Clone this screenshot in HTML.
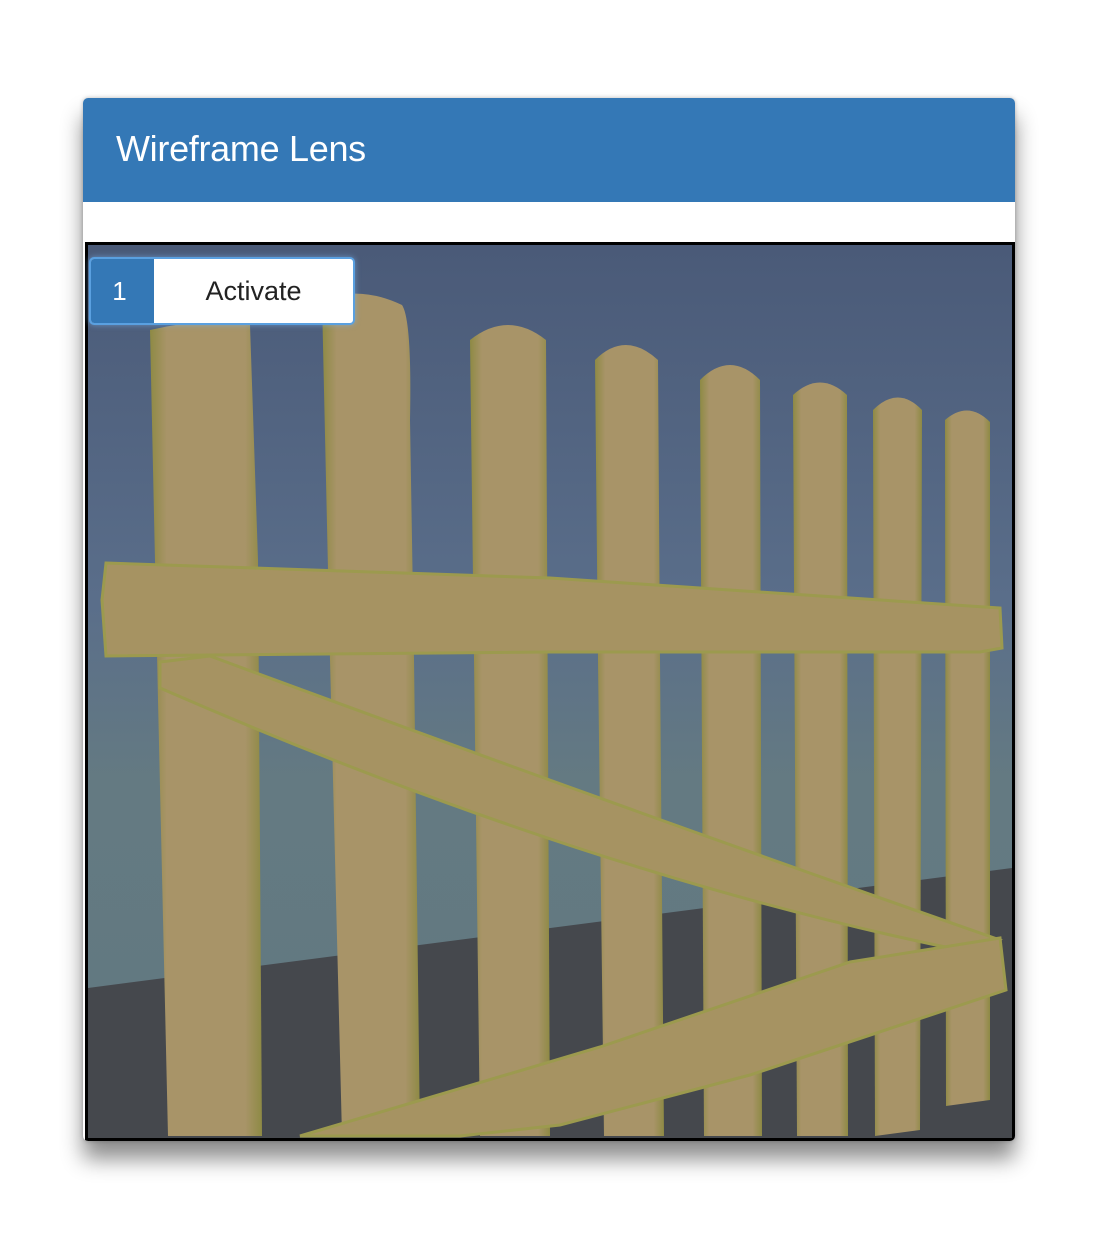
<!DOCTYPE html>
<html><head><meta charset="utf-8"><style>
body{margin:0;width:1096px;height:1238px;background:#fff;position:relative;overflow:hidden;font-family:"Liberation Sans",sans-serif}
.win{position:absolute;left:83px;top:98px;width:932px;height:1043px;background:#fff;border-radius:5px;box-shadow:0 18px 22px rgba(0,0,0,.45),0 0 4px rgba(0,0,0,.25);overflow:hidden}
.hd{position:absolute;left:0;top:0;width:932px;height:104px;background:#3478b6}
.hd span{position:absolute;left:33px;top:30px;color:#fff;font-size:36px;letter-spacing:-0.3px}
.cv{position:absolute;left:2px;top:144px;width:924px;height:893px;border:3px solid #000;overflow:hidden}
.btn{position:absolute;left:6px;top:159px;width:262px;height:64px;border:2px solid #5aa0e0;border-radius:5px;background:#fff;box-shadow:0 0 6px rgba(120,180,240,.6);overflow:hidden}
.btn .n{position:absolute;left:0;top:0;width:63px;height:64px;background:#3478b6;color:#fff;font-size:26px;line-height:64px;text-align:center;padding-right:6px;box-sizing:border-box}
.btn .t{position:absolute;left:63px;right:0;top:0;height:64px;line-height:64px;text-align:center;font-size:27px;color:#222}
</style></head><body>
<div class="win">
<div class="hd"><span>Wireframe Lens</span></div>
<div class="cv">
<svg width="924" height="893" viewBox="88 245 924 893" xmlns="http://www.w3.org/2000/svg">
<defs>
<linearGradient id="sky" x1="0" y1="0" x2="0" y2="1">
<stop offset="0" stop-color="#4a5a78"/><stop offset="0.4" stop-color="#5a6e8a"/><stop offset="0.6" stop-color="#647a82"/><stop offset="1" stop-color="#617880"/></linearGradient>
<linearGradient id="wd" x1="0" y1="0" x2="1" y2="0">
<stop offset="0" stop-color="#8e8a44"/><stop offset="0.15" stop-color="#a89468"/><stop offset="0.85" stop-color="#a89468"/><stop offset="1" stop-color="#8e8a44"/></linearGradient>
</defs>
<rect x="88" y="245" width="924" height="893" fill="url(#sky)"/>
<polygon points="88,988 1012,868 1012,1138 88,1138" fill="#45484d"/>
<g fill="url(#wd)">
<path d="M150,330 Q200,318 250,325 L258,560 L262,1136 L168,1136 L158,700 Z"/>
<path d="M322,300 Q360,285 402,305 Q412,320 410,420 L414,660 L420,1136 L342,1136 L330,660 Z"/>
<path d="M470,340 Q508,310 546,340 L550,1136 L480,1136 Z"/>
<path d="M595,360 Q625,330 658,360 L660,660 L664,1136 L604,1136 L598,660 Z"/>
<path d="M700,380 Q730,350 760,380 L762,1136 L704,1136 Z"/>
<path d="M793,395 Q820,370 847,395 L848,1136 L797,1136 Z"/>
<path d="M873,410 Q898,385 922,410 L920,1130 L875,1136 Z"/>
<path d="M945,420 Q968,400 990,422 L990,1100 L946,1106 Z"/>
</g>
<g fill="#a69362" stroke="#9c9a4e" stroke-width="3">
<path d="M106,563 L550,578 L1000,608 L1002,648 L980,652 L550,652 L106,656 L102,600 Z"/>
<path d="M160,662 L210,656 Q600,800 1000,940 L985,955 Q600,880 160,688 Z"/>
<path d="M300,1136 L600,1047 L850,962 L1000,938 L1006,990 L750,1075 L560,1125 L460,1136 Z"/>
</g>
</svg>
</div>
<div class="btn"><div class="n">1</div><div class="t">Activate</div></div>
</div>
</body></html>
